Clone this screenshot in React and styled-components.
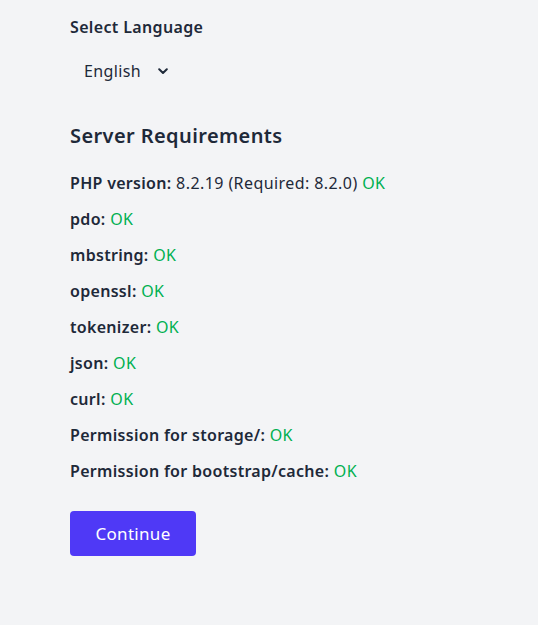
import React from "react";
import styled, { createGlobalStyle } from "styled-components";

const GlobalStyle = createGlobalStyle`
  html, body { margin: 0; padding: 0; background: #f3f4f6; }
  body {
    font-family: "Noto Sans", "Open Sans", sans-serif;
    color: #1e2939;
    -webkit-font-smoothing: antialiased;
  }
`;

const Page = styled.main`
  min-height: 625px;
  box-sizing: border-box;
  padding: 15px 70px 40px;
  background: #f3f4f6;
`;

const Label = styled.label`
  display: block;
  font-size: 16px;
  line-height: 24px;
  font-weight: 600;
  letter-spacing: 0.35px;
`;

const SelectWrap = styled.div`
  position: relative;
  display: inline-flex;
  align-items: center;
  margin-top: 12px;
`;

const Select = styled.select`
  appearance: none;
  -webkit-appearance: none;
  border: none;
  background: transparent;
  font-family: inherit;
  font-size: 16px;
  line-height: 24px;
  letter-spacing: 0.35px;
  color: #1e2939;
  height: 40px;
  padding: 0 36px 0 14px;
  width: 112px;
  outline: none;
  cursor: pointer;
`;

const Chevron = styled.svg`
  position: absolute;
  left: 88px;
  top: 17px;
  pointer-events: none;
`;

const Heading = styled.h2`
  margin: 31px 0 0;
  font-size: 20px;
  line-height: 28px;
  font-weight: 600;
  letter-spacing: 0.4px;
`;

const List = styled.ul`
  list-style: none;
  margin: 21px 0 0;
  padding: 0;
  display: flex;
  flex-direction: column;
  gap: 12px;
`;

const Item = styled.li`
  font-size: 16px;
  line-height: 24px;
  letter-spacing: 0.42px;
  white-space: nowrap;
`;

const Key = styled.strong`
  font-weight: 600;
  letter-spacing: 0.3px;
`;

const Status = styled.span`
  color: ${(p) => (p.$ok ? "#00b050" : "#e7000b")};
`;

const Button = styled.button`
  margin-top: 28px;
  display: inline-flex;
  align-items: center;
  justify-content: center;
  width: 126px;
  height: 45px;
  border: none;
  border-radius: 4px;
  background: #4f39f6;
  color: #ffffff;
  font-family: inherit;
  font-size: 17px;
  letter-spacing: 0.3px;
  cursor: pointer;
`;

const requirements = [
  { name: "PHP version", detail: "8.2.19 (Required: 8.2.0)", ok: true },
  { name: "pdo", ok: true },
  { name: "mbstring", ok: true },
  { name: "openssl", ok: true },
  { name: "tokenizer", ok: true },
  { name: "json", ok: true },
  { name: "curl", ok: true },
  { name: "Permission for storage/", ok: true },
  { name: "Permission for bootstrap/cache", ok: true },
];

export default function App() {
  return (
    <>
      <GlobalStyle />
      <Page>
        <Label htmlFor="lang">Select Language</Label>
        <SelectWrap>
          <Select id="lang" defaultValue="en">
            <option value="en">English</option>
          </Select>
          <Chevron width="10" height="7" viewBox="0 0 10 7" fill="none">
            <path d="M1.2 1.3 L5 5 L8.8 1.3" stroke="#1e2939" strokeWidth="2" strokeLinecap="round" strokeLinejoin="round" />
          </Chevron>
        </SelectWrap>
        <Heading>Server Requirements</Heading>
        <List>
          {requirements.map((r) => (
            <Item key={r.name}>
              <Key>{r.name}:</Key> {r.detail ? `${r.detail} ` : ""}
              <Status $ok={r.ok}>{r.ok ? "OK" : "FAIL"}</Status>
            </Item>
          ))}
        </List>
        <Button type="button">Continue</Button>
      </Page>
    </>
  );
}
